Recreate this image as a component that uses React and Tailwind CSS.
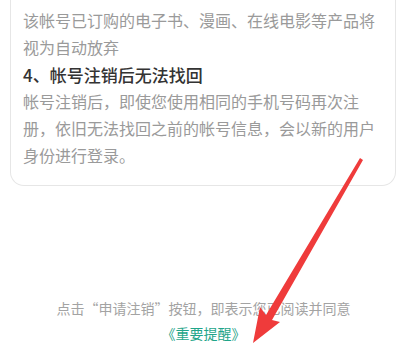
export default function App() {
  return (
    <div
      className="relative w-[407px] h-[350px] overflow-hidden bg-white"
      style={{ fontFamily: '"Noto Sans CJK SC", "Noto Sans", sans-serif' }}
    >
      <div className="mx-[10px] mr-[11px] border border-t-0 border-[#e6e6e6] rounded-b-[14px] pl-[12px] pr-[10px] pt-[7px] pb-[16px]">
        <p className="text-[16px] leading-[27px] text-[#9a9a9a] whitespace-nowrap">
          该帐号已订购的电子书、漫画、在线电影等产品将
          <br />
          视为自动放弃
        </p>
        <p className="text-[17px] leading-[27px] text-[#333333] font-medium">
          4、帐号注销后无法找回
        </p>
        <p className="text-[16px] leading-[27px] text-[#9a9a9a] whitespace-nowrap">
          帐号注销后，即使您使用相同的手机号码再次注
          <br />
          册，依旧无法找回之前的帐号信息，会以新的用户
          <br />
          身份进行登录。
        </p>
      </div>
      <div className="mt-[111px] flex flex-col items-center">
        <p className="text-[14px] leading-[22px] text-[#a3a3a3]">
          点击“申请注销”按钮，即表示您已阅读并同意
        </p>
        <p className="mt-[3px] text-[14px] leading-[22px] text-[#1fa58a]">
          《重要提醒》
        </p>
      </div>
      <svg
        className="absolute left-0 top-0 pointer-events-none"
        width="407"
        height="350"
        viewBox="0 0 407 350"
      >
        <polygon
          points="253,343 260,307 266,315 360,158 363,160 272,320 280,322"
          fill="#ef3b3b"
        />
      </svg>
    </div>
  );
}
